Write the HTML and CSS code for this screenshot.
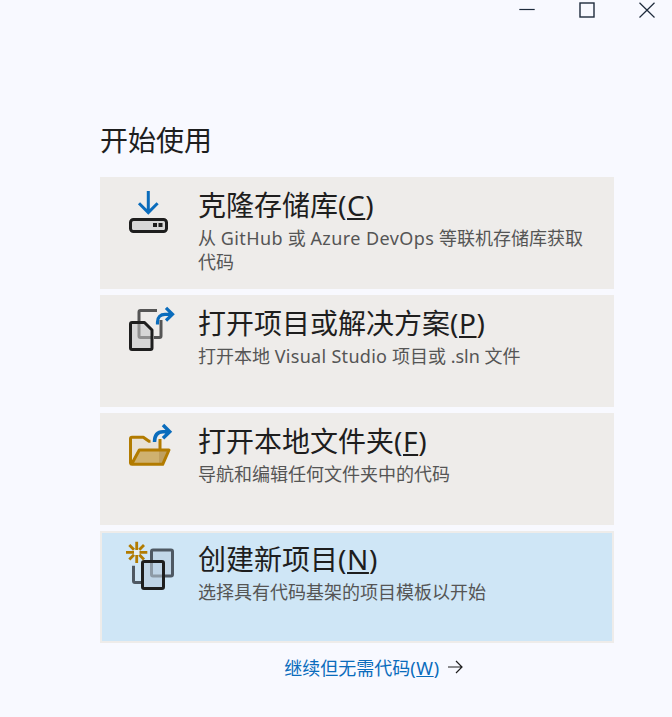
FILE: index.html
```html
<!DOCTYPE html>
<html lang="zh-CN">
<head>
<meta charset="utf-8">
<title>开始使用</title>
<link rel="stylesheet" href="styles.css">
</head>
<body>
<div class="window-controls">
  <button class="win-btn" aria-label="最小化"><svg width="16" height="20" viewBox="0 0 16 20"><path d="M0.300 9.500H15.700" stroke="#1e2b3c" stroke-width="1.200" fill="none"/></svg></button>
  <button class="win-btn" aria-label="最大化"><svg width="16" height="20" viewBox="0 0 16 20"><rect x="1" y="3" width="14" height="14" stroke="#1e2b3c" stroke-width="1.400" fill="none"/></svg></button>
  <button class="win-btn" aria-label="关闭"><svg width="16" height="20" viewBox="0 0 16 20"><path d="M0.500 2.700L15.500 17.500M15.500 2.700L0.500 17.500" stroke="#1e2b3c" stroke-width="1.200" fill="none"/></svg></button>
</div>
<main class="main">
  <h1 class="heading">开始使用</h1>
  <div class="cards">
    <a class="card">
      <span class="card-icon"><svg width="50" height="52" viewBox="0 -2 50 52">
        <rect x="4.500" y="30.500" width="36" height="12" rx="3" fill="#d8d8d8" stroke="#1e1e1e" stroke-width="3"/>
        <rect x="27" y="34" width="4" height="4" fill="#1e1e1e"/><rect x="32.500" y="34" width="4" height="4" fill="#1e1e1e"/>
        <path d="M22.300 2V24M13 14.300L22.300 23.600L31.600 14.300" fill="none" stroke="#0a6cbc" stroke-width="3"/>
      </svg></span>
      <span class="card-text">
        <span class="card-title">克隆存储库<span class="paren">(<u>C</u>)</span></span>
        <span class="card-desc">从 <span class="lat-wide">GitHub</span> 或 <span class="lat-wide">Azure DevOps</span> 等联机存储库获取代码</span>
      </span>
    </a>
    <a class="card">
      <span class="card-icon"><svg width="50" height="52" viewBox="0 -2 50 52">
        <path d="M31 3.500H14.500A1.500 1.500 0 0 0 13 5V14M28 30.500H33.500A1.500 1.500 0 0 0 35 29V13" fill="none" stroke="#555" stroke-width="3"/>
        <path d="M5.500 15.500H18.500L26 23V41A1.500 1.500 0 0 1 24.500 42.500H6A1.500 1.500 0 0 1 4.500 41V17A1.500 1.500 0 0 1 6 15.500Z" fill="#d6d6d6"/>
        <path d="M13 14V29A1.500 1.500 0 0 0 14.500 30.500H26" fill="none" stroke="#8f8f8f" stroke-width="3"/>
        <path d="M6 15.500H18.500L26 23V41A1.500 1.500 0 0 1 24.500 42.500H6A1.500 1.500 0 0 1 4.500 41V17A1.500 1.500 0 0 1 6 15.500Z" fill="none" stroke="#1e1e1e" stroke-width="3" stroke-linejoin="round"/>
        <path d="M31.500 17.500V15C31.500 10 34.500 7.300 39 7.300H45M40 0.800L46.500 7.300L40 13.500" fill="none" stroke="#0a6cbc" stroke-width="3.200"/>
      </svg></span>
      <span class="card-text">
        <span class="card-title">打开项目或解决方案<span class="paren">(<u>P</u>)</span></span>
        <span class="card-desc">打开本地 <span class="lat">Visual Studio</span> 项目或 .sln 文件</span>
      </span>
    </a>
    <a class="card">
      <span class="card-icon"><svg width="50" height="52" viewBox="0 -2 50 52">
        <path d="M5 12.500H17.500L23.500 16.500H34V25H13L5 39Z" fill="#e8e1d6"/>
        <path d="M13.300 25H43L36.700 39.300H5.700Z" fill="#cfb16f"/>
        <path d="M33 25H43L36.700 39.300H33Z" fill="#bf9f5e"/>
        <path d="M34 14V25M24.500 16.300H23L17.300 12.300H6A1.500 1.500 0 0 0 4.500 13.800V38A1.500 1.500 0 0 0 6 39.300H36.700L43 25H13.300L5.700 39" fill="none" stroke="#b27b00" stroke-width="3" stroke-linejoin="round"/>
        <path d="M28.500 17C28.500 10 31.500 6.700 37 6.700H43M37 0L43.700 6.700L37 13.300" fill="none" stroke="#0a6cbc" stroke-width="3.500"/>
      </svg></span>
      <span class="card-text">
        <span class="card-title">打开本地文件夹<span class="paren">(<u>F</u>)</span></span>
        <span class="card-desc">导航和编辑任何文件夹中的代码</span>
      </span>
    </a>
    <a class="card card-active">
      <span class="card-icon"><svg width="50" height="52" viewBox="0 -2 50 52">
        <rect x="25.500" y="7" width="21" height="26" rx="1.500" fill="#c2d7e8"/>
        <path d="M25.500 17V8.500A1.500 1.500 0 0 1 27 7H45A1.500 1.500 0 0 1 46.500 8.500V31.500A1.500 1.500 0 0 1 45 33H39" fill="none" stroke="#4f5963" stroke-width="3"/>
        <path d="M7.500 22.700V38A1.500 1.500 0 0 0 9 39.500H15" fill="none" stroke="#4f5963" stroke-width="3"/>
        <rect x="16.500" y="18.500" width="21" height="27" rx="1.500" fill="#bfd4e6"/>
        <path d="M25.500 18.500V31.500A1.500 1.500 0 0 0 27 33H37.500" fill="none" stroke="#8d9aa6" stroke-width="3"/>
        <rect x="16.500" y="18.500" width="21" height="27" rx="1.500" fill="none" stroke="#1e1e1e" stroke-width="3"/>
        <circle cx="10.700" cy="9.300" r="3" fill="#e6eef0"/>
        <path d="M10.700 -1.300V7M10.700 12V20M0 9.300H8M13.500 9.300H21.300M3.300 2L8 6.800M18 2L13.300 6.800M3.300 16.600L8 11.800M18 16.600L13.300 11.800" fill="none" stroke="#b27b00" stroke-width="2.800"/>
      </svg></span>
      <span class="card-text">
        <span class="card-title">创建新项目<span class="paren">(<u>N</u>)</span></span>
        <span class="card-desc">选择具有代码基架的项目模板以开始</span>
      </span>
    </a>
  </div>
  <div class="continue">
    <a class="continue-link">继续但无需代码<span class="paren">(<u>W</u>)</span></a>
    <svg class="continue-arrow" width="16" height="14" viewBox="0 0 16 14"><path d="M1 7H15M9 1L15 7L9 13" fill="none" stroke="#1e1e1e" stroke-width="1.200"/></svg>
  </div>
</main>
</body>
</html>
```
FILE: styles.css
```css
* { box-sizing: border-box; }
html, body { margin: 0; height: 100%; }
body {
  background: #f8f9ff;
  color: #1e1e1e;
  font-family: "Noto Sans", "Noto Sans CJK SC", sans-serif;
  overflow: hidden;
}
.window-controls {
  display: flex;
  justify-content: flex-end;
  height: 20px;
  padding-right: 17px;
  gap: 44px;
}
.win-btn {
  width: 16px;
  height: 20px;
  padding: 0;
  border: 0;
  background: none;
  display: block;
}
.win-btn svg { display: block; }
.main {
  margin: 0 58px 0 100px;
  padding-top: 100px;
}
.heading {
  margin: 0 0 17px;
  font-size: 28px;
  line-height: 40px;
  font-weight: 400;
}
.cards { display: flex; flex-direction: column; gap: 6px; }
.card {
  display: flex;
  height: 112px;
  background: #eeecea;
  padding: 8px 28px 0 26px;
}
.card-active {
  background: #cfe6f6;
  border: 2px solid #eeecea;
  padding: 6px 26px 0 24px;
}
.card-icon {
  flex: 0 0 50px;
  width: 50px;
  margin-top: 2px;
  margin-right: 22px;
}
.card-icon svg { display: block; overflow: visible; }
.card-text { display: flex; flex-direction: column; min-width: 0; }
.card-title {
  font-size: 28px;
  line-height: 40px;
}
.paren { letter-spacing: 0.6px; }
.lat { letter-spacing: 0.3px; }
.lat-wide { letter-spacing: 0.42px; }
.card-desc {
  font-size: 18px;
  line-height: 24px;
  margin-top: 1px;
  color: #555;
}
.continue {
  display: flex;
  justify-content: center;
  align-items: center;
  gap: 7px;
  margin-top: 11px;
  padding-left: 33px;
  height: 26px;
}
.continue-link { font-size: 18px; color: #0a6cbc; }
.continue-arrow { display: block; }
```
